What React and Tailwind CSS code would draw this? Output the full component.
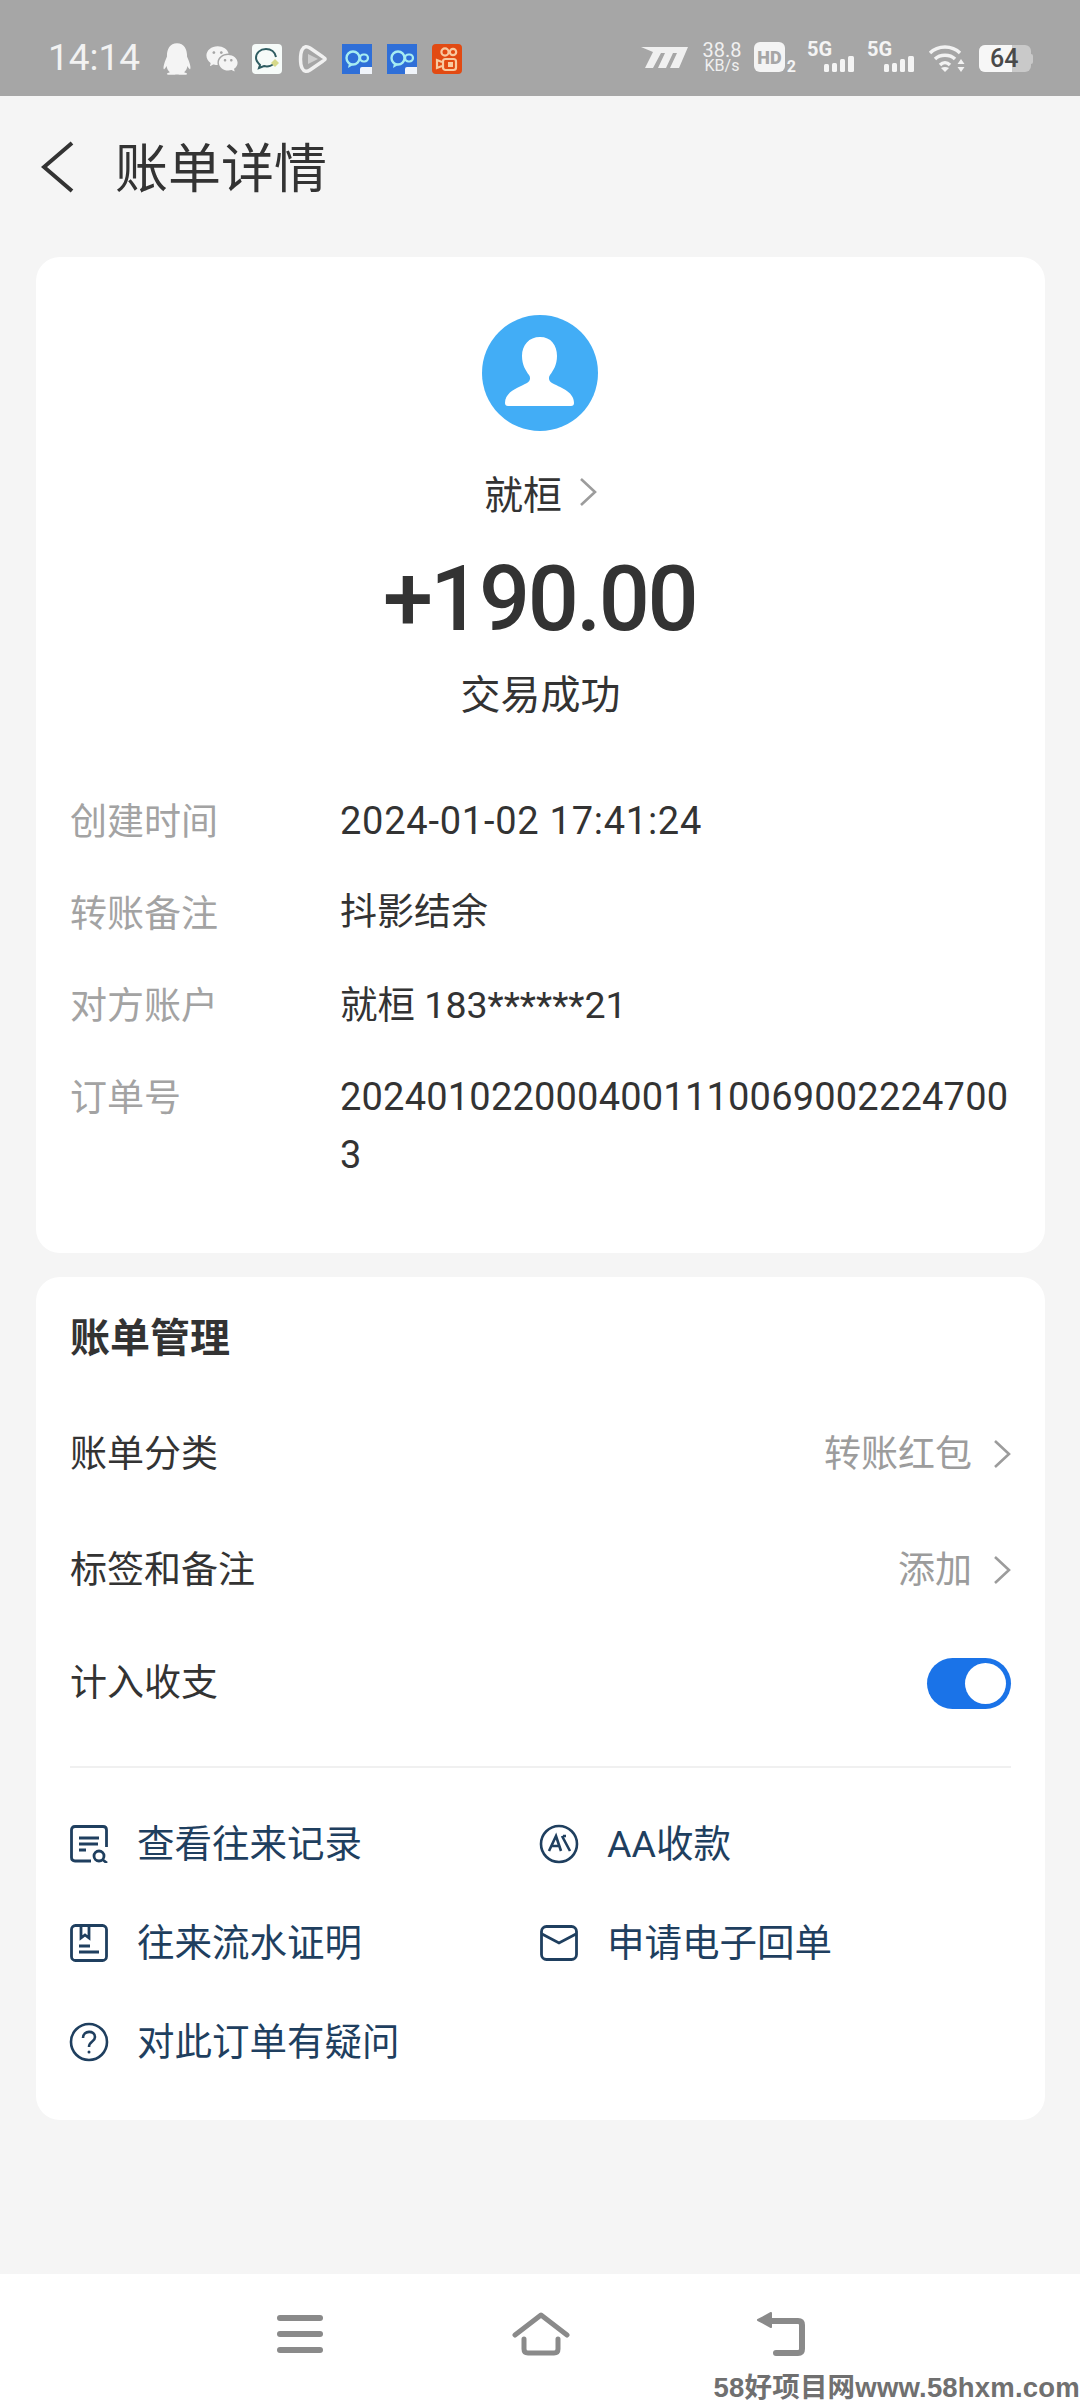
import React from "react";
import { RiQqFill, RiWechatFill } from "react-icons/ri";

const cjk = "font-['Noto_Sans_CJK_SC',sans-serif]";

function Chevron({ className = "", color = "#9c9c9c" }) {
  return (
    <svg className={className} width="18" height="30" viewBox="0 0 18 30" fill="none">
      <path d="M2 2 L16 15 L2 28" stroke={color} strokeWidth="2.6" />
    </svg>
  );
}

function ChatTile() {
  return (
    <div className="w-[30px] h-[30px] rounded-[4px] bg-[#f6fbf9] flex items-center justify-center">
      <svg width="26" height="26" viewBox="0 0 26 26" fill="none">
        <path d="M12 3 C6 3 2 7 2 12 C2 15 4 17 6 19 L5 22 L10 20 C14 21 19 20 21 16" stroke="#2f5d62" strokeWidth="2" />
        <path d="M12 3 C17 3 21 6 22 11" stroke="#2f5d62" strokeWidth="2" />
        <path d="M21 13 L25 17 L21 21 L17 17Z" fill="#d6d98a" />
      </svg>
    </div>
  );
}

function BlueTile() {
  return (
    <div className="relative w-[30px] h-[30px] bg-[#2f6fd8] flex items-center justify-center">
      <svg width="26" height="22" viewBox="0 0 26 22" fill="none">
        <circle cx="9" cy="10" r="6.5" stroke="#a6ecf2" strokeWidth="2.4" />
        <path d="M5 15 L4 20 L9 17" fill="#a6ecf2" />
        <rect x="16" y="6.5" width="8" height="7" rx="3.5" stroke="#a6ecf2" strokeWidth="2.2" />
      </svg>
      <div className="absolute right-0 bottom-0 w-[12px] h-[7px] rounded-tl-[2px] bg-[#f0f4fa]" />
    </div>
  );
}

function OrangeTile() {
  return (
    <div className="w-[30px] h-[30px] rounded-[4px] bg-[#e24a12] flex items-center justify-center">
      <svg width="24" height="26" viewBox="0 0 24 26" fill="none" stroke="#f8c9a0" strokeWidth="2.2">
        <circle cx="10" cy="6" r="3.6" />
        <circle cx="18" cy="6" r="3.2" />
        <rect x="8" y="13" width="13" height="11" rx="2.5" />
        <path d="M7 16 L2 14 V22 L7 20" />
        <rect x="13" y="16" width="5" height="5" fill="#f8c9a0" stroke="none" />
      </svg>
    </div>
  );
}

function PlayIcon() {
  return (
    <svg width="30" height="30" viewBox="0 0 30 30" fill="none">
      <path d="M5 6 C3 10 3 20 5 24 C7 28 10 28 13 26 L26 17 C29 15.500 29 14.500 26 13 L13 4 C10 2 7 2 5 6Z" stroke="#f0f0f0" strokeWidth="3.4" />
      <path d="M11 10 L21 15 L11 20Z" fill="#cfcfcf" />
    </svg>
  );
}

function SignalBars() {
  return (
    <div className="flex items-end gap-[3px] h-[16px]">
      <div className="w-[5px] h-[8px] rounded-[1.500px] bg-[#f4f4f4]" />
      <div className="w-[5px] h-[9px] rounded-[1.500px] bg-[#f4f4f4]" />
      <div className="w-[5px] h-[13px] rounded-[1.500px] bg-[#f4f4f4]" />
      <div className="w-[6px] h-[16px] rounded-[1.500px] bg-[#f4f4f4]" />
    </div>
  );
}

function Signal() {
  return (
    <div className="relative w-[47px] h-[30px] flex justify-end items-end">
      <span className="absolute left-0 top-0 text-[20px] leading-[15px] font-bold text-[#f4f4f4] font-['Roboto',sans-serif]">5G</span>
      <SignalBars />
    </div>
  );
}

function StatusBar() {
  return (
    <div className="h-[96px] shrink-0 bg-[#a6a6a6] flex items-start pt-[42px] pl-[48px]">
      <span className="w-[90px] text-[37px] leading-[30px] mt-[1px] text-[#f2f2f2] font-['Roboto',sans-serif] whitespace-nowrap">14:14</span>
      <div className="ml-[21px] flex items-center">
        <RiQqFill className="w-[38px] h-[38px] text-[#f4f4f4] -my-[4px] -mx-[1px]" />
        <RiWechatFill className="w-[34px] h-[34px] text-[#f4f4f4] ml-[10px]" />
        <div className="ml-[13px]"><ChatTile /></div>
        <div className="ml-[15px]"><PlayIcon /></div>
        <div className="ml-[15px]"><BlueTile /></div>
        <div className="ml-[15px]"><BlueTile /></div>
        <div className="ml-[15px]"><OrangeTile /></div>
      </div>
      <div className="ml-auto mr-[47px] flex items-start">
        <svg className="mt-[4px]" width="47" height="22" viewBox="0 0 47 22" fill="#f0f0f0">
          <path d="M0 1 H47 L38 22 H29 L36 7 H32 L25 22 H17 L24 7 H20 L12 22 H4 L12 6 Z" />
        </svg>
        <div className="ml-[15px] w-[38px] flex flex-col items-center text-[#f0f0f0] font-['Roboto',sans-serif]">
          <span className="text-[20px] leading-[17px]">38.8</span>
          <span className="text-[16px] leading-[14px]">KB/s</span>
        </div>
        <div className="ml-[13px] relative w-[42px] h-[30px]">
          <div className="w-[31px] h-[30px] rounded-[6px] bg-[#f4f4f4] flex items-center justify-center text-[18px] font-black text-[#a6a6a6] font-['Roboto',sans-serif]">HD</div>
          <span className="absolute right-0 bottom-[-1px] text-[16px] leading-[13px] font-bold text-[#f4f4f4] font-['Roboto',sans-serif]">2</span>
        </div>
        <div className="ml-[11px]"><Signal /></div>
        <div className="ml-[13px]"><Signal /></div>
        <svg className="ml-[14px] mt-[2px]" width="37" height="28" viewBox="0 0 37 28" fill="none">
          <path d="M2 9 C10 1 24 1 32 9" stroke="#f2f2f2" strokeWidth="3.4" />
          <path d="M7 15 C12 10 22 10 27 15" stroke="#f2f2f2" strokeWidth="3.4" />
          <path d="M12 21 C15 18 19 18 22 21" stroke="#f2f2f2" strokeWidth="3.4" />
          <path d="M17 28 L13 24 Q17 22 21 24Z" fill="#f2f2f2" />
          <path d="M33 15 L36.500 20 H29.500Z M33 28 L29.500 23 H36.500Z" fill="#f2f2f2" />
        </svg>
        <div className="ml-[14px] mt-[3px] flex items-center">
          <div className="relative w-[52px] h-[27px] rounded-[6px] overflow-hidden bg-[#c9c9c9]">
            <div className="absolute left-0 top-0 h-full w-[33px] bg-[#f7f7f7]" />
            <span className="absolute inset-0 pl-[11px] text-[25px] leading-[27px] font-medium text-[#4a4a4a] font-['Roboto',sans-serif]">64</span>
          </div>
          <div className="w-[2px] h-[10px] rounded-r-[2px] bg-[#c9c9c9]" />
        </div>
      </div>
    </div>
  );
}

function DetailRow({ label, value, valueClass = "" }) {
  return (
    <div className="flex leading-[58px]">
      <div className="w-[270px] shrink-0 text-[37px] -mt-[2px] text-[#a3a3a3]">{label}</div>
      <div className={`text-[#333333] ${valueClass} font-['Roboto','Noto_Sans_CJK_SC',sans-serif]`}>{value}</div>
    </div>
  );
}

function ManageRow({ label, value, className = "" }) {
  return (
    <div className={`flex items-center justify-between text-[37px] leading-[58px] ${className}`}>
      <span className="text-[#333333]">{label}</span>
      <span className="flex items-center text-[#9c9c9c]">
        {value}
        <Chevron className="ml-[21px] mt-[5px]" />
      </span>
    </div>
  );
}

const stroke = "#1f3f5f";

function RecordIcon() {
  return (
    <svg width="38" height="38" viewBox="0 0 38 38" fill="none" stroke={stroke} strokeWidth="2.8">
      <path d="M21 36 H5 Q1.500 36 1.500 32.500 V5 Q1.500 1.500 5 1.500 H33 Q36.500 1.500 36.500 5 V22" />
      <path d="M9 13 H29 M9 19 H28 M9 25 H16" />
      <circle cx="29" cy="31" r="5" />
      <path d="M33 35 L37 38" />
    </svg>
  );
}

function ProofIcon() {
  return (
    <svg width="38" height="38" viewBox="0 0 38 38" fill="none" stroke={stroke} strokeWidth="2.8">
      <rect x="1.500" y="1.500" width="35" height="35" rx="4" />
      <path d="M11 2 V14 L15 11 L19 14 V2" />
      <path d="M9 22 H20 M9 28 H29" />
    </svg>
  );
}

function HelpIcon() {
  return (
    <svg width="40" height="40" viewBox="0 0 40 40" fill="none" stroke={stroke} strokeWidth="2.6">
      <circle cx="20" cy="20" r="18" />
      <path d="M14 16 C14 8 26 8 26 15 C26 20 20 19 20 25" />
      <circle cx="20" cy="30" r="1.500" fill={stroke} stroke="none" />
    </svg>
  );
}

function AaIcon() {
  return (
    <svg width="40" height="40" viewBox="0 0 40 40" fill="none" stroke={stroke} strokeWidth="2.6">
      <circle cx="20" cy="20" r="18" />
      <path d="M10 27 L17 12 L22 27 M12 22 H20" />
      <path d="M23 12 L31 27 M24 12 L27 12" />
    </svg>
  );
}

function MailIcon() {
  return (
    <svg width="38" height="36" viewBox="0 0 38 36" fill="none" stroke={stroke} strokeWidth="2.8">
      <rect x="1.500" y="1.500" width="35" height="33" rx="5" />
      <path d="M2 9 L19 18 L36 9" />
    </svg>
  );
}

function LinkItem({ icon, text, className = "" }) {
  return (
    <div className={`flex items-center h-[58px] ${className}`}>
      <span className="w-[40px] flex justify-center -ml-[1px]">{icon}</span>
      <span className="ml-[28px] text-[37.500px] leading-[58px] text-[#1f3f5f] whitespace-nowrap font-['Roboto','Noto_Sans_CJK_SC',sans-serif]">{text}</span>
    </div>
  );
}

export default function App() {
  return (
    <div className={`relative w-[1080px] h-[2400px] overflow-hidden bg-[#f5f5f5] flex flex-col ${cjk}`}>
      <StatusBar />
      <header className="h-[142px] mb-[19px] shrink-0 flex items-center pl-[41px]">
        <svg width="33" height="52" viewBox="0 0 33 52" fill="none">
          <path d="M31 2 L3 26 L31 50" stroke="#333333" strokeWidth="4" />
        </svg>
        <h1 className="ml-[41px] -mt-[5px] text-[53px] leading-[60px] text-[#333333] font-normal">账单详情</h1>
      </header>

      <section className="ml-[36px] w-[1009px] h-[996px] shrink-0 rounded-[24px] bg-white pt-[58px] px-[34px]">
        <div className="flex flex-col items-center">
          <svg width="116" height="116" viewBox="0 0 116 116" className="-ml-[2px]">
            <circle cx="58" cy="58" r="58" fill="#42adf6" />
            <path fill="#ffffff" d="M58 22 C47 22 40 30 40 41 C40 50 44 56 47 60 C49 63 48 66 45 68 C38 72 23 76 23 88 Q23 91 26 91 L89 91 Q92 91 92 88 C92 76 77 72 70 68 C67 66 66 63 68 60 C71 56 75 50 75 41 C75 30 69 22 58 22Z" />
          </svg>
          <div className="mt-[31px] flex items-center text-[39px] leading-[60px] text-[#333333]">
            就桓
            <Chevron className="ml-[17px]" />
          </div>
          <div className="mt-[28px] text-[90px] leading-[100px] font-medium text-[#333333] font-['Roboto',sans-serif] tracking-[-2.500px] -ml-[2px]">+190.00</div>
          <div className="mt-[12px] text-[40px] leading-[60px] text-[#333333]">交易成功</div>
        </div>
        <div className="mt-[70px] flex flex-col gap-[34px]">
          <DetailRow label="创建时间" value="2024-01-02 17:41:24" valueClass="text-[38px] whitespace-nowrap tracking-[0.75px]" />
          <DetailRow label="转账备注" value="抖影结余" valueClass="text-[37px] whitespace-nowrap" />
          <DetailRow label="对方账户" value="就桓 183******21" valueClass="text-[37.500px] whitespace-nowrap" />
          <DetailRow label="订单号" value="20240102200040011100690022247003" valueClass="text-[38px] w-[676px] break-all tracking-[0.2px]" />
        </div>
      </section>

      <section className="mt-[24px] ml-[36px] w-[1009px] h-[843px] shrink-0 rounded-[24px] bg-white pt-[28px] px-[34px]">
        <h2 className="text-[40px] leading-[60px] font-bold text-[#333333]">账单管理</h2>
        <ManageRow label="账单分类" value="转账红包" className="mt-[57px]" />
        <ManageRow label="标签和备注" value="添加" className="mt-[58px]" />
        <div className="mt-[58px] h-[58px] flex items-center justify-between text-[37px] leading-[58px]">
          <span className="text-[#333333] -mt-[7px]">计入收支</span>
          <div className="w-[84px] h-[51px] rounded-full bg-[#1a73e8] flex items-center justify-end pr-[5px]">
            <div className="w-[41px] h-[41px] rounded-full bg-white" />
          </div>
        </div>
        <div className="mt-[54px] h-[2px] bg-[#f0f0f0]" />
        <div className="mt-[47px] grid grid-cols-[470px_1fr] gap-y-[41px]">
          <LinkItem icon={<RecordIcon />} text="查看往来记录" />
          <LinkItem icon={<AaIcon />} text="AA收款" />
          <LinkItem icon={<ProofIcon />} text="往来流水证明" />
          <LinkItem icon={<MailIcon />} text="申请电子回单" />
          <LinkItem icon={<HelpIcon />} text="对此订单有疑问" />
        </div>
      </section>

      <div className="flex-1" />

      <nav className="h-[126px] shrink-0 bg-white flex items-start pt-[38px] pl-[277px]">
        <svg width="46" height="41" viewBox="0 0 46 41" fill="#8a8a8a" className="mt-[3px]">
          <rect x="0" y="0" width="46" height="6" rx="3" />
          <rect x="0" y="16" width="46" height="6" rx="3" />
          <rect x="0" y="32" width="46" height="6" rx="3" />
        </svg>
        <svg width="58" height="44" viewBox="0 0 58 44" fill="none" stroke="#8a8a8a" strokeWidth="5" strokeLinecap="round" strokeLinejoin="round" className="ml-[189px]">
          <path d="M3 23 L29 3 L55 23" />
          <path d="M12 27 V37 Q12 41 16 41 H42 Q46 41 46 37 V27" />
        </svg>
        <svg width="52" height="44" viewBox="0 0 52 44" fill="none" className="ml-[186px]">
          <path d="M12 9 H42 Q46 9 46 13 V37 Q46 41 42 41 H20" stroke="#8a8a8a" strokeWidth="6" strokeLinecap="round" />
          <path d="M15 1 L2 8 L15 15Z" fill="#8a8a8a" stroke="#8a8a8a" strokeWidth="2" strokeLinejoin="round" />
        </svg>
      </nav>

      <div className="absolute right-0 bottom-0 h-[25px] text-[27.500px] tracking-[0.2px] leading-[25px] font-bold text-[#707070] whitespace-nowrap font-['Liberation_Sans','Noto_Sans_CJK_SC',sans-serif]">
        58好项目网www.58hxm.com
      </div>
    </div>
  );
}
